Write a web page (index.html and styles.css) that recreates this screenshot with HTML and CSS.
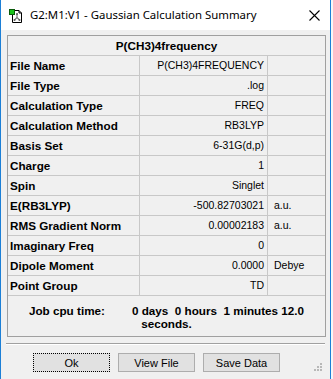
FILE: index.html
```html
<!DOCTYPE html>
<html>
<head>
<meta charset="utf-8">
<link rel="stylesheet" href="styles.css">
</head>
<body>
<div class="window">
  <div class="titlebar">
    <svg class="app-icon" width="14" height="14" viewBox="0 0 14 14">
      <path d="M3.5 1.5 H10 L12.5 4 V13.5 H3.5 Z" fill="#fff" stroke="#000" stroke-width="1"/>
      <path d="M10 1.5 V4 H12.5" fill="none" stroke="#000" stroke-width="1"/>
      <path d="M8 5 V8.5 M8 8.5 L5.5 11 M8 8.5 L10.5 11" stroke="#7a7a7a" stroke-width="1.2" fill="none"/>
      <circle cx="8" cy="5" r="1" fill="#555"/>
      <circle cx="5.5" cy="11" r="1" fill="#555"/>
      <circle cx="10.5" cy="11" r="1" fill="#555"/>
      <rect x="0.5" y="0.5" width="5" height="5" fill="#19c31a" stroke="#0a5a0a" stroke-width="1"/>
    </svg>
    <span class="title">G2:M1:V1 - Gaussian Calculation Summary</span>
    <svg class="close" width="11" height="11" viewBox="0 0 11 11">
      <path d="M0.5 0.5 L10.5 10.5 M10.5 0.5 L0.5 10.5" stroke="#000" stroke-width="1.1"/>
    </svg>
  </div>
  <div class="content">
    <div class="summary">
      <div class="cell head">P(CH3)4frequency</div>

      <div class="cell label">File Name</div><div class="cell value">P(CH3)4FREQUENCY</div><div class="cell unit"></div>
      <div class="cell label">File Type</div><div class="cell value">.log</div><div class="cell unit"></div>
      <div class="cell label">Calculation Type</div><div class="cell value">FREQ</div><div class="cell unit"></div>
      <div class="cell label">Calculation Method</div><div class="cell value">RB3LYP</div><div class="cell unit"></div>
      <div class="cell label">Basis Set</div><div class="cell value">6-31G(d,p)</div><div class="cell unit"></div>
      <div class="cell label">Charge</div><div class="cell value">1</div><div class="cell unit"></div>
      <div class="cell label">Spin</div><div class="cell value">Singlet</div><div class="cell unit"></div>
      <div class="cell label">E(RB3LYP)</div><div class="cell value">-500.82703021</div><div class="cell unit">a.u.</div>
      <div class="cell label">RMS Gradient Norm</div><div class="cell value">0.00002183</div><div class="cell unit">a.u.</div>
      <div class="cell label">Imaginary Freq</div><div class="cell value">0</div><div class="cell unit"></div>
      <div class="cell label">Dipole Moment</div><div class="cell value">0.0000</div><div class="cell unit">Debye</div>
      <div class="cell label">Point Group</div><div class="cell value">TD</div><div class="cell unit"></div>

      <div class="cell job"><span class="job-label">Job cpu time:</span><span class="job-value">0 days  0 hours  1 minutes 12.0</span><br>seconds.</div>
    </div>
    <div class="separator"></div>
    <div class="buttons">
      <button class="btn default"><span class="focus">Ok</span></button>
      <button class="btn">View File</button>
      <button class="btn">Save Data</button>
    </div>
  </div>
  <svg class="grip" width="9" height="9" viewBox="0 0 9 9">
    <rect x="6" y="0" width="2" height="2" fill="#b8b8b8"/>
    <rect x="3" y="3" width="2" height="2" fill="#b8b8b8"/>
    <rect x="6" y="3" width="2" height="2" fill="#b8b8b8"/>
    <rect x="0" y="6" width="2" height="2" fill="#b8b8b8"/>
    <rect x="3" y="6" width="2" height="2" fill="#b8b8b8"/>
    <rect x="6" y="6" width="2" height="2" fill="#b8b8b8"/>
  </svg>
</div>
</body>
</html>
```

FILE: styles.css
```css
* { box-sizing: border-box; }

html, body {
  margin: 0;
  padding: 0;
  background: #f7f7f7;
  overflow: hidden;
}

.window {
  position: relative;
  width: 331px;
  height: 379px;
  background: #f0f0f0;
  border-left: 1px solid #1c7fd6;
  border-right: 1px solid #1c7fd6;
  font-family: "Liberation Sans", Arial, sans-serif;
  color: #000;
}

.titlebar {
  height: 30px;
  background: #fff;
  display: flex;
  align-items: center;
}

.app-icon {
  margin-left: 8px;
  margin-top: 1px;
}

.title {
  margin-left: 7px;
  font-family: "Noto Sans", "Open Sans", sans-serif;
  font-size: 11.4px;
  color: #000;
  flex: 1;
  padding-bottom: 1px;
}

.close {
  margin-right: 10px;
}

.content {
  padding: 5px 0 0 6px;
}

.summary {
  width: 319px;
  border: 1px solid #a0a0a0;
  display: grid;
  grid-template-columns: 132px 128px 57px;
}

.cell {
  height: 20px;
  line-height: 19px;
  border-bottom: 1px solid #c8c8c8;
  white-space: nowrap;
  overflow: hidden;
}

.head {
  grid-column: 1 / 4;
  text-align: center;
  font-weight: bold;
  font-size: 11.7px;
}

.label {
  border-right: 1px solid #c8c8c8;
  padding-left: 2px;
  font-weight: bold;
  font-size: 11.7px;
}

.value {
  border-right: 1px solid #c8c8c8;
  text-align: right;
  padding-right: 3px;
  font-size: 10.5px;
}

.unit {
  padding-left: 6px;
  font-size: 10.5px;
}

.job {
  grid-column: 1 / 4;
  height: 40px;
  border-bottom: none;
  text-align: center;
  font-weight: bold;
  font-size: 11.7px;
  line-height: 13px;
  padding-top: 8px;
  white-space: pre;
}

.job-label {
  margin-right: 27px;
}

.separator {
  margin-top: 6px;
  margin-left: -1px;
  width: 319px;
  height: 2px;
  border-top: 1px solid #a0a0a0;
  border-bottom: 1px solid #ffffff;
}

.buttons {
  display: flex;
  gap: 8px;
  margin-top: 8px;
  margin-left: 26px;
}

.btn {
  width: 77px;
  height: 19px;
  padding: 0;
  margin: 0;
  background: #e1e1e1;
  border: 1px solid #adadad;
  font-family: "Liberation Sans", Arial, sans-serif;
  font-size: 11px;
  color: #000;
  display: flex;
  align-items: center;
  justify-content: center;
}

.btn.default {
  border: 1px dotted #000;
  background: #e1e1e1;
}

.focus {
  display: block;
}

.grip {
  position: absolute;
  right: 7px;
  bottom: 7px;
}
```
